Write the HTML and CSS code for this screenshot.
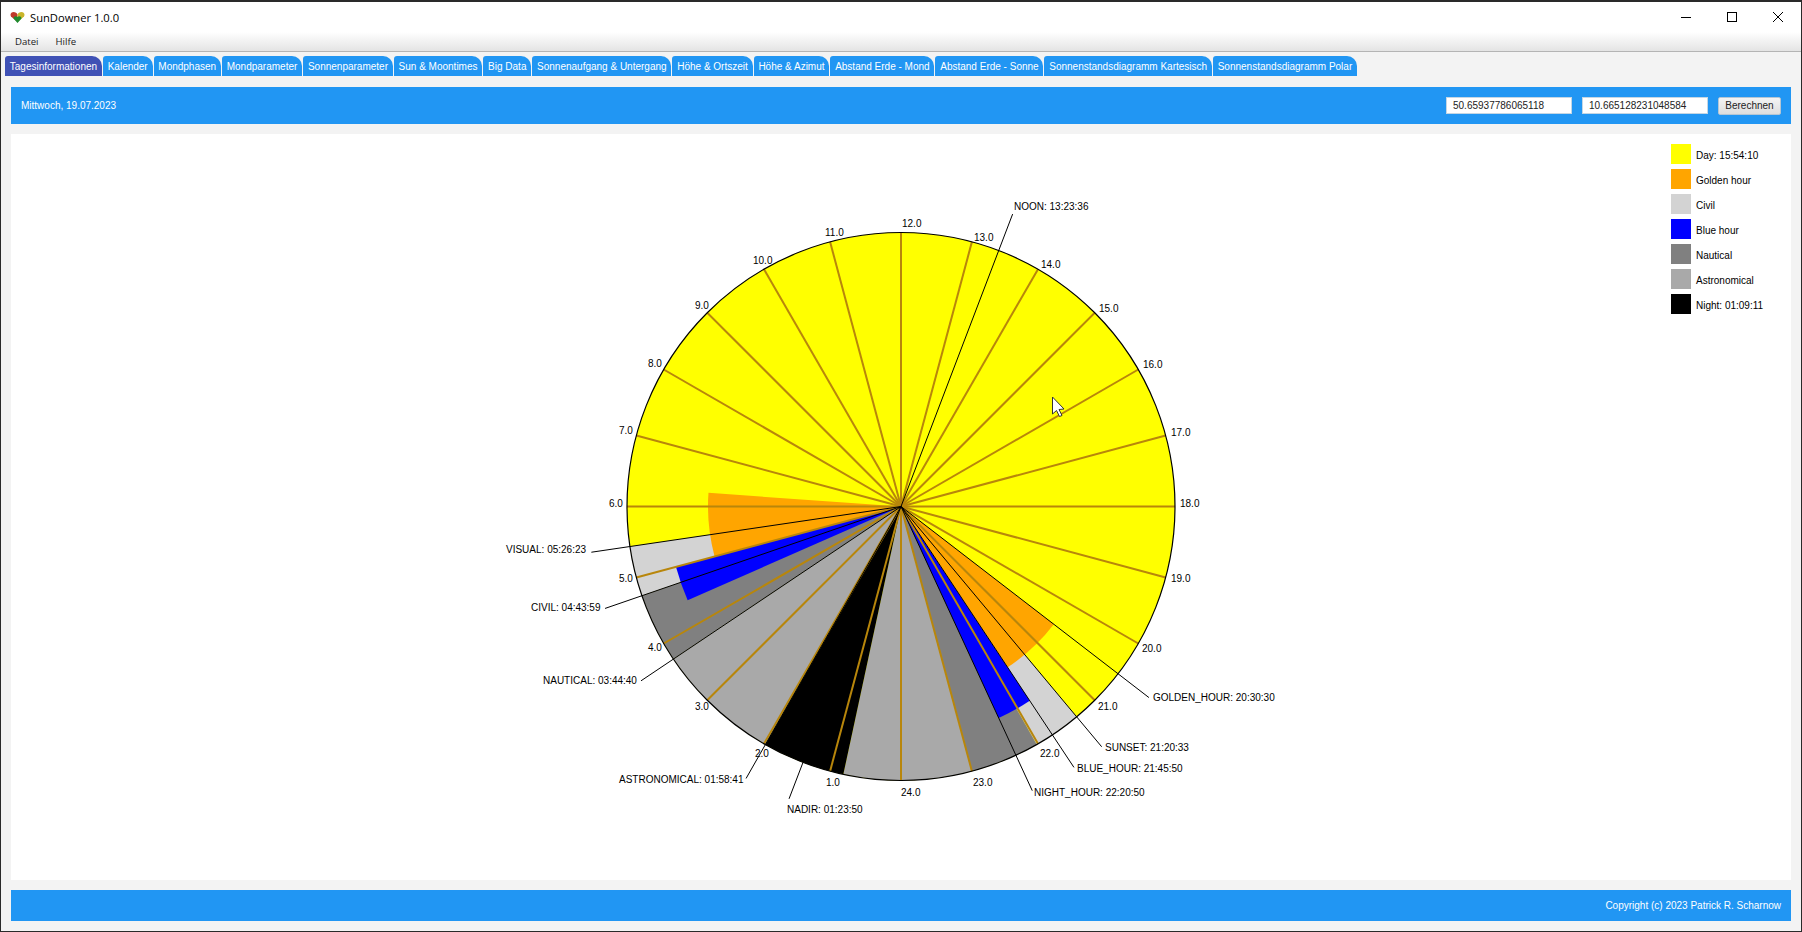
FILE: index.html
```html
<!DOCTYPE html>
<html lang="de">
<head>
  <meta charset="UTF-8" />
  <title>SunDowner 1.0.0</title>
  <link rel="stylesheet" href="styles.css">
</head>
<body>
  <div class="window">

    <!-- Title bar -->
    <div class="titlebar">
      <svg class="app-icon" width="15" height="11" viewBox="0 0 15 11">
        <path class="heart-red" d="M7.5 10 L1 4.5 C-0.5 2 1.5 0 3.5 0 C5.5 0 7 1 7.5 2.5 Z"/>
        <path class="heart-yellow" d="M7.5 10 L14 4.5 C15.5 2 13.5 0 11.5 0 C9.5 0 8 1 7.5 2.5 Z"/>
        <path class="heart-green" d="M7.5 11 L3.5 6.5 C3.5 4.5 6 3.5 7.5 5 C9 3.5 11.5 4.5 11.5 6.5 Z"/>
      </svg>
      <span class="app-title">SunDowner 1.0.0</span>
      <div class="window-controls">
        <svg width="10" height="10" viewBox="0 0 10 10"><path d="M0 5.5 H10"/></svg>
        <svg width="10" height="10" viewBox="0 0 10 10"><rect x="0.5" y="0.5" width="9" height="9"/></svg>
        <svg width="10" height="10" viewBox="0 0 10 10"><path d="M0 0 L10 10 M10 0 L0 10"/></svg>
      </div>
    </div>

    <!-- Menu -->
    <div class="menubar">
      <span>Datei</span>
      <span>Hilfe</span>
    </div>

    <!-- Tabs -->
    <div class="tabs">
      <div class="tab active">Tagesinformationen</div>
      <div class="tab">Kalender</div>
      <div class="tab">Mondphasen</div>
      <div class="tab">Mondparameter</div>
      <div class="tab">Sonnenparameter</div>
      <div class="tab">Sun &amp; Moontimes</div>
      <div class="tab">Big Data</div>
      <div class="tab">Sonnenaufgang &amp; Untergang</div>
      <div class="tab">Höhe &amp; Ortszeit</div>
      <div class="tab">Höhe &amp; Azimut</div>
      <div class="tab">Abstand Erde - Mond</div>
      <div class="tab">Abstand Erde - Sonne</div>
      <div class="tab">Sonnenstandsdiagramm Kartesisch</div>
      <div class="tab">Sonnenstandsdiagramm Polar</div>
    </div>

    <!-- Date and location -->
    <div class="topbar">
      <span class="date">Mittwoch, 19.07.2023</span>
      <input class="coord" type="text" value="50.65937786065118">
      <input class="coord" type="text" value="10.665128231048584">
      <button class="calc">Berechnen</button>
    </div>

    <!-- Chart -->
    <div class="chart-panel">
      <svg id="chart" viewBox="11 134 1780 746"></svg>
      <div class="legend">
        <div class="legend-row"><span class="swatch day"></span><span class="legend-label">Day: 15:54:10</span></div>
        <div class="legend-row"><span class="swatch golden"></span><span class="legend-label">Golden hour</span></div>
        <div class="legend-row"><span class="swatch civil"></span><span class="legend-label">Civil</span></div>
        <div class="legend-row"><span class="swatch blue"></span><span class="legend-label">Blue hour</span></div>
        <div class="legend-row"><span class="swatch nautical"></span><span class="legend-label">Nautical</span></div>
        <div class="legend-row"><span class="swatch astro"></span><span class="legend-label">Astronomical</span></div>
        <div class="legend-row"><span class="swatch night"></span><span class="legend-label">Night: 01:09:11</span></div>
      </div>
    </div>

    <!-- Footer -->
    <div class="footer">Copyright (c) 2023 Patrick R. Scharnow</div>

  </div>
  <script src="chart.js"></script>
</body>
</html>
```

FILE: styles.css
```css
* {
  box-sizing: border-box;
}
html, body {
  margin: 0;
  padding: 0;
  height: 100%;
  overflow: hidden;
  background-color: #2a2a2a;
  font-family: "Liberation Sans", Arial, sans-serif;
  font-size: 10px;
}

.window {
  height: 929px;
  margin: 2px 1px 1px 1px;
  background-color: #f3f3f3;
  display: flex;
  flex-direction: column;
}

.titlebar {
  height: 30px;
  flex: none;
  background-color: #ffffff;
  display: flex;
  align-items: center;
  padding-left: 9px;
}
.app-title {
  margin-left: 5px;
  font-family: "Open Sans", sans-serif;
  font-size: 11.2px;
  color: #000;
}
.heart-red { fill: #c0392b; }
.heart-yellow { fill: #c9b52a; }
.heart-green { fill: #1e8a2e; }

.window-controls {
  margin-left: auto;
  margin-right: 18px;
  display: flex;
  gap: 36px;
}
.window-controls svg {
  display: block;
  fill: none;
  stroke: #000;
  stroke-width: 1;
}

.menubar {
  height: 20px;
  flex: none;
  background: linear-gradient(#ffffff, #e4e4e4);
  border-bottom: 1px solid #b4b4b4;
  display: flex;
  align-items: center;
  padding-left: 14px;
  gap: 17px;
  font-family: "Open Sans", sans-serif;
  font-size: 9.6px;
  color: #222;
}

.tabs {
  display: flex;
  flex: none;
  gap: 1px;
  margin-top: 4px;
  padding-left: 4px;
}
.tab {
  height: 20px;
  line-height: 22px;
  padding: 0 4.8px;
  color: #fff;
  background-color: #2196f3;
  border-radius: 3px 10px 0 0;
  white-space: nowrap;
}
.tab.active {
  background-color: #3f51b5;
}

.topbar {
  height: 37px;
  flex: none;
  margin: 11px 10px 0 10px;
  background-color: #2196f3;
  display: flex;
  align-items: center;
  padding: 0 10px;
}
.date {
  color: #fff;
  margin-right: auto;
}
.coord {
  width: 126px;
  height: 17px;
  margin-right: 10px;
  padding: 0 6px;
  border: 1px solid #c4d6e4;
  font-family: inherit;
  font-size: 10px;
  color: #222;
  background: #fff;
}
.calc {
  width: 63px;
  height: 18px;
  padding: 0;
  border: 1px solid #b5c6d4;
  border-radius: 2px;
  font-family: inherit;
  font-size: 10px;
  color: #222;
  background: linear-gradient(#f4f4f4, #dedede);
}

.chart-panel {
  flex: 1;
  position: relative;
  margin: 10px 10px 0 10px;
  background-color: #fff;
  min-height: 0;
}
#chart {
  display: block;
  width: 100%;
  height: 100%;
}
#chart text {
  font-size: 10px;
  fill: #000;
}

.wedge-day { fill: #ffff00; }
.wedge-golden { fill: #ffa500; }
.wedge-civil { fill: #d3d3d3; }
.wedge-blue { fill: #0000ff; }
.wedge-nautical { fill: #808080; }
.wedge-astro { fill: #a9a9a9; }
.wedge-night { fill: #000000; }
.tick { stroke: #b8860b; stroke-width: 2; }
.rim { fill: none; stroke: #000; stroke-width: 1.2; }
.event { stroke: #000; stroke-width: 1; }
.cursor { fill: #fff; stroke: #333; stroke-width: 1; }

.legend {
  position: absolute;
  top: 10px;
  left: 1660px;
  display: flex;
  flex-direction: column;
  gap: 5px;
}
.legend-row {
  display: flex;
  align-items: center;
  gap: 5px;
  color: #000;
}
.legend-label {
  margin-top: 2px;
}
.swatch {
  width: 20px;
  height: 20px;
}
.swatch.day { background: #ffff00; }
.swatch.golden { background: #ffa500; }
.swatch.civil { background: #d3d3d3; }
.swatch.blue { background: #0000ff; }
.swatch.nautical { background: #808080; }
.swatch.astro { background: #a9a9a9; }
.swatch.night { background: #000000; }

.footer {
  height: 31px;
  line-height: 31px;
  flex: none;
  margin: 10px 10px 10px 10px;
  padding-right: 10px;
  background-color: #2196f3;
  color: #fff;
  text-align: right;
}
```

FILE: chart.js
```js
// Polar sun chart, hours run clockwise with 12 at the top
const chart = document.getElementById("chart");
const cx = 901, cy = 506.5, R = 274, eventR = 313;

function add(tag, attrs, text) {
  const el = document.createElementNS("http://www.w3.org/2000/svg", tag);
  Object.keys(attrs).forEach(k => el.setAttribute(k, attrs[k]));
  if (text) el.textContent = text;
  chart.appendChild(el);
  return el;
}

function point(hour, r) {
  const a = (hour - 12) * Math.PI / 12;
  return [cx + r * Math.sin(a), cy - r * Math.cos(a)];
}

function wedge(from, to, r, cls) {
  const p1 = point(from, r), p2 = point(to, r);
  add("path", {
    class: cls,
    d: `M${cx} ${cy} L${p1[0]} ${p1[1]} A${r} ${r} 0 0 1 ${p2[0]} ${p2[1]} Z`
  });
}

add("circle", { class: "wedge-day", cx: cx, cy: cy, r: R });

const wedges = [
  [4.733, 5.44, R, "wedge-civil"],
  [21.342, 22.02, R, "wedge-civil"],
  [3.744, 4.733, R, "wedge-nautical"],
  [22.02, 23, R, "wedge-nautical"],
  [1.978, 3.744, R, "wedge-astro"],
  [23, 24.81, R, "wedge-astro"],
  [0.81, 1.978, R, "wedge-night"],
  [4.42, 5, 233, "wedge-blue"],
  [21.764, 22.347, 233, "wedge-blue"],
  [5, 6.27, 193, "wedge-golden"],
  [20.508, 21.764, 193, "wedge-golden"]
];
wedges.forEach(w => wedge(w[0], w[1], w[2], w[3]));

// hour ticks with their label spot (x, baseline)
const hours = {
  1: [826, 786], 2: [755, 757], 3: [695, 710], 4: [648, 651], 5: [619, 582], 6: [609, 507],
  7: [619, 434], 8: [648, 367], 9: [695, 309], 10: [753, 264], 11: [825, 236], 12: [902, 227],
  13: [974, 241], 14: [1041, 268], 15: [1099, 312], 16: [1143, 368], 17: [1171, 436], 18: [1180, 507],
  19: [1171, 582], 20: [1142, 652], 21: [1098, 710], 22: [1040, 757], 23: [973, 786], 24: [901, 796]
};
Object.keys(hours).forEach(h => {
  const p = point(+h, R);
  add("line", { class: "tick", x1: cx, y1: cy, x2: p[0], y2: p[1] });
  add("text", { x: hours[h][0], y: hours[h][1] }, (+h).toFixed(1));
});

add("circle", { class: "rim", cx: cx, cy: cy, r: R });

const events = [
  [13.393, "NOON: 13:23:36", 1014, 210],
  [20.508, "GOLDEN_HOUR: 20:30:30", 1153, 701],
  [21.342, "SUNSET: 21:20:33", 1105, 751],
  [21.764, "BLUE_HOUR: 21:45:50", 1077, 772],
  [22.347, "NIGHT_HOUR: 22:20:50", 1034, 796],
  [1.397, "NADIR: 01:23:50", 787, 813],
  [1.978, "ASTRONOMICAL: 01:58:41", 619, 783],
  [3.744, "NAUTICAL: 03:44:40", 543, 684],
  [4.733, "CIVIL: 04:43:59", 531, 611],
  [5.44, "VISUAL: 05:26:23", 506, 553]
];
events.forEach(e => {
  const p = point(e[0], eventR);
  add("line", { class: "event", x1: cx, y1: cy, x2: p[0], y2: p[1] });
  add("text", { x: e[2], y: e[3] }, e[1]);
});

// mouse pointer in the screenshot
add("path", {
  class: "cursor",
  d: "M1052.5 397 V414 L1056.5 410.5 L1059.5 416.5 L1062 415.5 L1059 409.5 L1064 409 Z"
});
```
